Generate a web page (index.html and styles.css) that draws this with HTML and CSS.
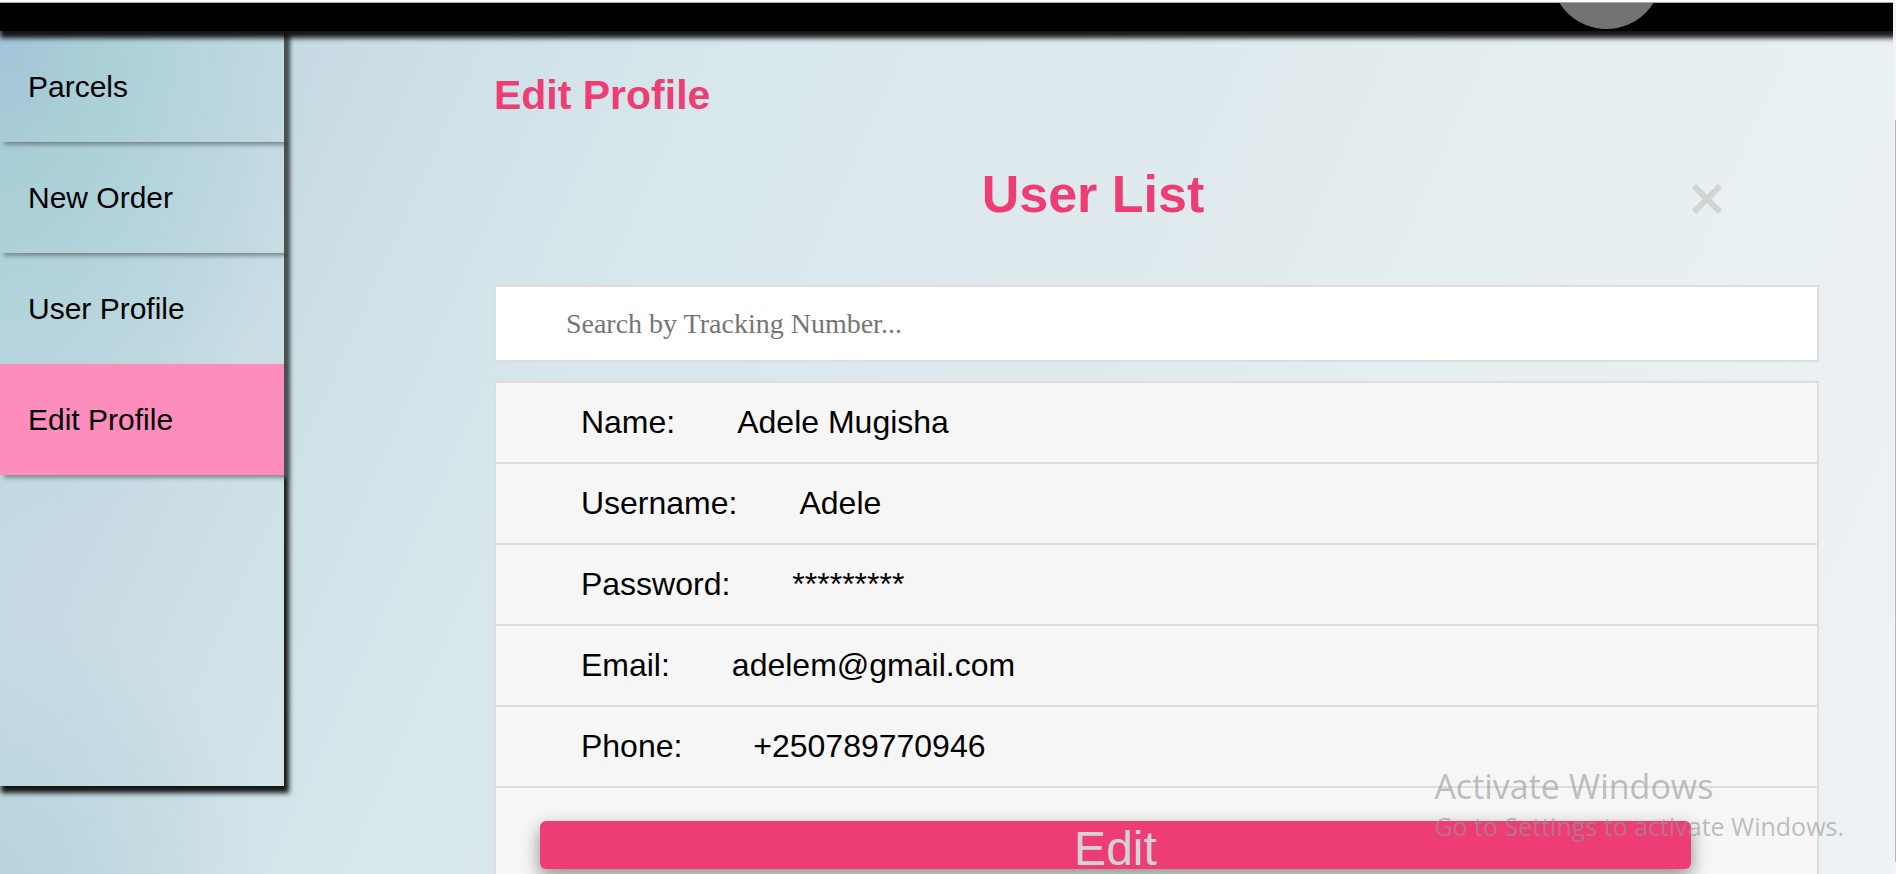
FILE: index.html
```html
<!DOCTYPE html>
<html lang="en">
<head>
<meta charset="utf-8">
<title>Edit Profile</title>
<link rel="stylesheet" href="styles.css">
</head>
<body>
<div class="page">
  <header class="topbar"><span class="avatar"></span></header>
  <div class="layout">
    <nav class="sidebar">
      <a class="tab" href="#parcels">Parcels</a>
      <a class="tab" href="#new-order">New Order</a>
      <a class="tab" href="#user-profile">User Profile</a>
      <a class="tab tab-active" href="#edit-profile" aria-current="page">Edit Profile</a>
    </nav>
    <main class="content">
      <h1 class="title">Edit Profile</h1>
      <div class="list-head">
        <h2 class="list-title">User List</h2>
        <button class="close" type="button" aria-label="Close">
          <svg class="close-icon" viewBox="0 0 30 30" aria-hidden="true"><path d="M2 2L28 28M28 2L2 28"/></svg>
        </button>
      </div>
      <input class="search" type="text" placeholder="Search by Tracking Number..." aria-label="Search by Tracking Number">
      <ul class="users">
        <li class="row"><span class="label">Name:</span>Adele Mugisha</li>
        <li class="row"><span class="label">Username:</span>Adele</li>
        <li class="row"><span class="label">Password:</span>*********</li>
        <li class="row"><span class="label">Email:</span>adelem@gmail.com</li>
        <li class="row"><span class="label">Phone:</span>&nbsp;+250789770946</li>
        <li class="row row-action"><button class="edit" type="button">Edit</button></li>
      </ul>
    </main>
  </div>
</div>
<div class="scrollbar"><span class="thumb"></span></div>
<aside class="watermark">
  <p class="mark-title">Activate Windows</p>
  <p class="mark-text">Go to Settings to activate Windows.</p>
</aside>
</body>
</html>
```
FILE: styles.css
```css
* {
  box-sizing: border-box;
}

body {
  position: relative;
  height: 100vh;
  margin: 0;
  padding-right: 3px;
  overflow: hidden;
  border-top: 2px solid #fdfdfd;
  background: #f3f3f3;
  font-family: "Liberation Sans", Arial, sans-serif;
  color: #000;
}

.page {
  height: 100%;
  overflow: hidden;
  border-top: 1px solid #a9a9a9;
  background:
    radial-gradient(ellipse 17% 58% at 0 4%, #a2c4d8 0, #a6ced6e6 25%, #aed2d9b3 55%, #b8d6de00 100%),
    radial-gradient(ellipse 14% 30% at 0 100%, #b8d3dc 0, #b8d3dc00 100%),
    linear-gradient(114deg, #bcd5de 0, #c8dbe4 14%, #cfe2e7 23%, #d6e7ec 31%, #dbe8ed 42%, #dfeaee 54%, #e5eef0 68%, #ebf1f3 88%, #edf2f4 100%);
}

.topbar {
  position: relative;
  z-index: 2;
  height: 28px;
  background: #000;
  box-shadow: 2px 5px 5px 2px rgba(0, 0, 0, 0.9);
}

.avatar {
  position: absolute;
  right: 231px;
  bottom: 2px;
  width: 111px;
  height: 111px;
  border-radius: 50%;
  background: #727375;
  clip-path: inset(85px 0 0 0);
}

.layout {
  display: flex;
  align-items: flex-start;
}

.sidebar {
  position: relative;
  width: 15%;
  height: calc(100vh - 119px);
  box-shadow: 3px 5px 5px 2px rgba(0, 0, 0, 0.9);
}

.tab {
  display: block;
  padding: 0 28px;
  font-size: 30px;
  line-height: 111px;
  color: #000;
  text-decoration: none;
  box-shadow: 4px 3px 4px rgba(95, 108, 110, 0.7);
}

.tab-active {
  background: #fd8dbc;
}

.content {
  flex: 1;
  margin: 40px 74px 0 210px;
}

.title {
  margin: 0 0 45px;
  font-size: 41px;
  line-height: 48px;
  color: #ee3d75;
}

.list-head {
  display: flex;
  align-items: center;
  margin-bottom: 61px;
  padding-right: 97px;
}

.list-title {
  flex: 1;
  margin: 0;
  font-size: 52px;
  line-height: 60px;
  text-align: center;
  color: #ee3d75;
}

.close {
  padding: 10px 0 0;
  border: 0;
  background: none;
}

.close-icon {
  display: block;
  width: 30px;
  height: 30px;
  fill: none;
  stroke: #d3d3d3;
  stroke-width: 6;
}

.search {
  display: block;
  width: 100%;
  height: 77px;
  padding: 0 0 0 70px;
  border: 2px solid #ddd;
  border-radius: 0;
  background: #fff;
  font-family: "Liberation Serif", "Times New Roman", serif;
  font-size: 28px;
}

.search::placeholder {
  color: #757575;
  opacity: 1;
}

.users {
  margin: 19px 0 0;
  padding: 0;
  border-top: 2px solid #ddd;
  list-style: none;
}

.row {
  padding: 0 85px;
  border: 2px solid #ddd;
  border-top: 0;
  background: #f6f6f6;
  font-size: 32px;
  line-height: 79px;
}

.label {
  margin-right: 62px;
}

.row-action {
  padding: 33px 126px 60px 44px;
}

.edit {
  display: block;
  width: 100%;
  height: 48px;
  padding: 8px 0 0;
  border: 0;
  border-radius: 6px;
  background: #ee3d75;
  box-shadow: 0 8px 16px rgba(0, 0, 0, 0.25), 0 6px 20px rgba(0, 0, 0, 0.2);
  font-family: inherit;
  font-size: 48px;
  line-height: 40px;
  color: #d3d3d3;
}

.scrollbar {
  position: absolute;
  top: 1px;
  right: 0;
  bottom: 0;
  width: 3px;
  padding: 117px 0 12px 2px;
  background: #f3f3f3;
}

.thumb {
  display: block;
  height: 100%;
  background: #b4b4b4;
}

.watermark {
  position: absolute;
  right: 52px;
  bottom: 30px;
  z-index: 3;
  font-family: "Open Sans", "Noto Sans", sans-serif;
  color: rgba(150, 150, 150, 0.62);
  white-space: nowrap;
}

.mark-title,
.mark-text {
  margin: 0;
}

.mark-title {
  font-size: 34px;
  line-height: 44px;
}

.mark-text {
  font-size: 25px;
  line-height: 36px;
}
```
